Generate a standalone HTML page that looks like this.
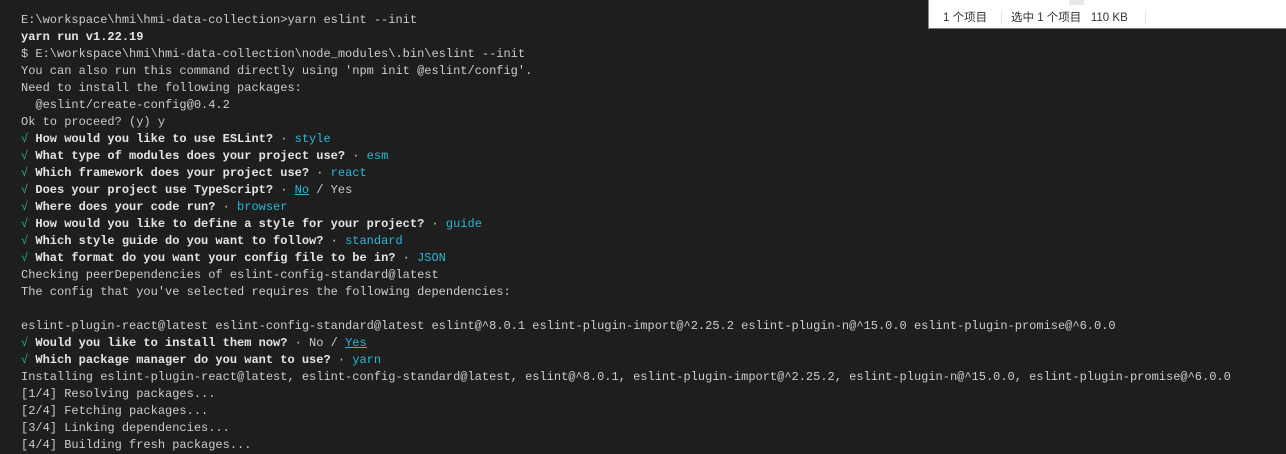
<!DOCTYPE html>
<html><head><meta charset="utf-8"><style>
html,body{margin:0;padding:0;width:1286px;height:443px;overflow:hidden;background:#1e1e1e}
pre{margin:0;position:absolute;left:21px;top:12px;font-family:"Liberation Mono","DejaVu Sans Mono",monospace;font-size:12px;line-height:17px;color:#cccccc;white-space:pre}
b{color:#e5e5e5}
.g{color:#23b87a}
.c{color:#29b8db}
.u{text-decoration:underline}
.ex{position:absolute;left:928px;top:-1px;width:360px;height:29px;background:#fff;border-left:1px solid #888;border-bottom:1px solid #777;font-family:"Liberation Sans","Noto Sans CJK SC",sans-serif;font-size:11.5px;color:#333}
.ex span{position:absolute;top:10px}
.sep{position:absolute;top:12px;width:1px;height:13px;background:#e5e5e5}
</style></head><body>
<pre>E:\workspace\hmi\hmi-data-collection&gt;yarn eslint --init
<b>yarn run v1.22.19</b>
$ E:\workspace\hmi\hmi-data-collection\node_modules\.bin\eslint --init
You can also run this command directly using 'npm init @eslint/config'.
Need to install the following packages:
  @eslint/create-config@0.4.2
Ok to proceed? (y) y
<span class="g">√</span> <b>How would you like to use ESLint?</b> · <span class="c">style</span>
<span class="g">√</span> <b>What type of modules does your project use?</b> · <span class="c">esm</span>
<span class="g">√</span> <b>Which framework does your project use?</b> · <span class="c">react</span>
<span class="g">√</span> <b>Does your project use TypeScript?</b> · <span class="c u">No</span> / Yes
<span class="g">√</span> <b>Where does your code run?</b> · <span class="c">browser</span>
<span class="g">√</span> <b>How would you like to define a style for your project?</b> · <span class="c">guide</span>
<span class="g">√</span> <b>Which style guide do you want to follow?</b> · <span class="c">standard</span>
<span class="g">√</span> <b>What format do you want your config file to be in?</b> · <span class="c">JSON</span>
Checking peerDependencies of eslint-config-standard@latest
The config that you've selected requires the following dependencies:

eslint-plugin-react@latest eslint-config-standard@latest eslint@^8.0.1 eslint-plugin-import@^2.25.2 eslint-plugin-n@^15.0.0 eslint-plugin-promise@^6.0.0
<span class="g">√</span> <b>Would you like to install them now?</b> · No / <span class="c u">Yes</span>
<span class="g">√</span> <b>Which package manager do you want to use?</b> · <span class="c">yarn</span>
Installing eslint-plugin-react@latest, eslint-config-standard@latest, eslint@^8.0.1, eslint-plugin-import@^2.25.2, eslint-plugin-n@^15.0.0, eslint-plugin-promise@^6.0.0
[1/4] Resolving packages...
[2/4] Fetching packages...
[3/4] Linking dependencies...
[4/4] Building fresh packages...</pre>
<div class="ex">
<div style="position:absolute;left:140px;top:0;width:15px;height:6px;background:#e8e8e8"></div>
<span style="left:14px">1 个项目</span>
<div class="sep" style="left:72px"></div>
<span style="left:82px">选中 1 个项目&nbsp;&nbsp;&nbsp;110 KB</span>
<div class="sep" style="left:216px"></div>
</div>
</body></html>
